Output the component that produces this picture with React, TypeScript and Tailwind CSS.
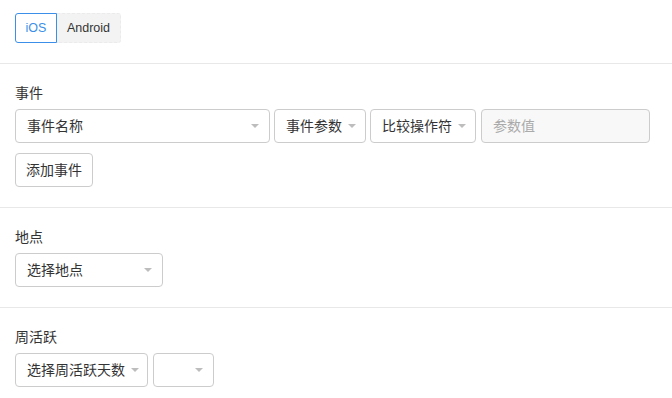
import React from "react";

const font = {
  fontFamily: '"Liberation Sans", "Noto Sans CJK SC", sans-serif',
};

function Caret() {
  return (
    <svg width="8" height="4" viewBox="0 0 8 4" className="shrink-0">
      <path d="M0 0 L8 0 L4 4 Z" fill="#bdbdbd" />
    </svg>
  );
}

type SelectBoxProps = {
  label?: string;
  widthClass: string;
};

function SelectBox({ label, widthClass }: SelectBoxProps) {
  return (
    <div
      className={`flex h-[34px] items-center rounded-[4px] border border-[#cccccc] bg-white pl-[11px] pr-[10px] text-[14px] text-[#333333] ${widthClass}`}
    >
      {label ? <span className="whitespace-nowrap">{label}</span> : null}
      <span className="ml-auto pl-[6px]">
        <Caret />
      </span>
    </div>
  );
}

function Section({ title, children }: { title: string; children: React.ReactNode }) {
  return (
    <div className="border-t border-[#e8e8e8] pt-[19px] pb-[20px] pl-[15px]">
      <div className="mb-[6px] h-[20px] text-[14px] leading-[20px] text-[#333333]">{title}</div>
      {children}
    </div>
  );
}

export default function App() {
  return (
    <div className="min-h-[398px] w-[672px] bg-white" style={font}>
      <div className="flex pt-[13px] pb-[20px] pl-[15px]">
        <button
          type="button"
          className="h-[30px] w-[42px] rounded-l-[3px] border border-[#3b8fe8] bg-white text-[12.5px] text-[#3b8fe8]"
        >
          iOS
        </button>
        <button
          type="button"
          className="h-[30px] w-[64px] rounded-r-[3px] border border-dashed border-[#ebebeb] border-l-0 bg-[#f3f3f3] text-[12.5px] text-[#333333]"
        >
          Android
        </button>
      </div>

      <Section title="事件">
        <div className="flex gap-[4px]">
          <SelectBox label="事件名称" widthClass="w-[255px]" />
          <SelectBox label="事件参数" widthClass="w-[92px]" />
          <SelectBox label="比较操作符" widthClass="w-[106px]" />
          <div className="ml-[1px] flex h-[34px] w-[169px] items-center rounded-[4px] border border-[#cccccc] bg-[#f8f8f8] pl-[11px] text-[14px] text-[#aaaaaa]">
            参数值
          </div>
        </div>
        <button
          type="button"
          className="mt-[10px] h-[34px] w-[78px] rounded-[4px] border border-[#cccccc] bg-white text-[14px] text-[#333333]"
        >
          添加事件
        </button>
      </Section>

      <Section title="地点">
        <SelectBox label="选择地点" widthClass="w-[148px]" />
      </Section>

      <Section title="周活跃">
        <div className="flex gap-[5px]">
          <SelectBox label="选择周活跃天数" widthClass="w-[133px]" />
          <SelectBox widthClass="w-[61px]" />
        </div>
      </Section>
    </div>
  );
}
